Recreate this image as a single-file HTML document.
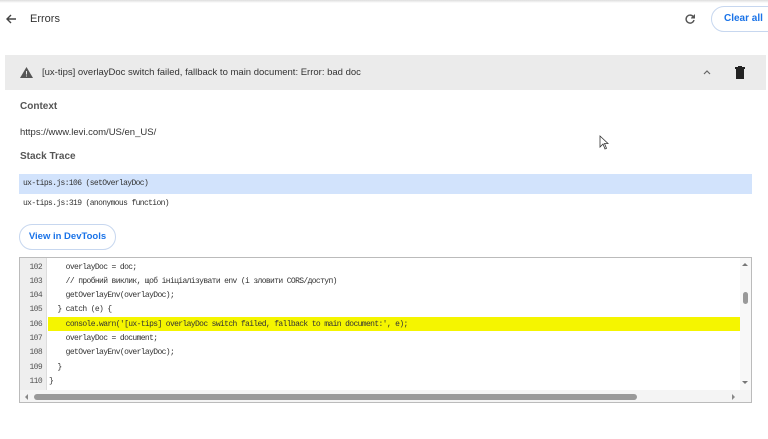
<!DOCTYPE html>
<html><head><meta charset="utf-8"><style>
*{margin:0;padding:0;box-sizing:border-box}
body{width:768px;height:439px;background:#fff;font-family:"Liberation Sans","Noto Sans CJK SC",sans-serif;color:#333;position:relative;overflow:hidden}
.abs{position:absolute}
.mono{font-family:"Liberation Mono","DejaVu Sans Mono",monospace;letter-spacing:-0.63px}
.ln{position:absolute;left:0;width:29px;text-align:right;padding-right:7px;font-size:8px;color:#555}
.cl{position:absolute;left:29px;font-size:8px;color:#333;white-space:pre;height:14px;line-height:14px}
</style></head><body>
<div class="abs" style="left:0;top:0;width:768px;height:3px;background:linear-gradient(#ddd,#fff)"></div>
<svg class="abs" style="left:5px;top:13px" width="12" height="12" viewBox="0 0 12 12"><path d="M11 6H2M6 2L2 6L6 10" stroke="#444" stroke-width="1.4" fill="none"/></svg>
<div class="abs" style="left:30px;top:13px;font-size:11px;color:#333">Errors</div>
<svg class="abs" style="left:684px;top:13px" width="12" height="12" viewBox="0 0 12 12"><path d="M9.5 4A4 4 0 1 0 10 7" stroke="#555" stroke-width="1.4" fill="none"/><path d="M10.5 1.5V5H7" fill="#555" stroke="#555" stroke-width="1"/></svg>
<div class="abs" style="left:711px;top:6px;width:80px;height:26px;border:1px solid #c7d7ef;border-radius:13px;color:#1a73e8;font-size:10px;font-weight:bold;line-height:24px;padding-left:12px">Clear all</div>
<div class="abs" style="left:5px;top:55px;width:761px;height:35px;background:#ebebeb"></div>
<svg class="abs" style="left:20px;top:67px" width="13" height="11" viewBox="0 0 13 11"><path d="M6.5 0L13 11H0Z" fill="#555"/><rect x="6" y="4" width="1" height="3.5" fill="#ebebeb"/><rect x="6" y="8.5" width="1" height="1" fill="#ebebeb"/></svg>
<div class="abs" style="left:42px;top:67px;font-size:9.5px;color:#333">[ux-tips] overlayDoc switch failed, fallback to main document: Error: bad doc</div>
<svg class="abs" style="left:703px;top:69px" width="8" height="6" viewBox="0 0 8 6"><path d="M1 5L4 2L7 5" stroke="#666" stroke-width="1.2" fill="none"/></svg>
<svg class="abs" style="left:735px;top:66px" width="10" height="13" viewBox="0 0 10 13"><rect x="0" y="1" width="10" height="2" fill="#222"/><rect x="3" y="0" width="4" height="2" fill="#222"/><rect x="1" y="3" width="8" height="10" fill="#222"/></svg>
<div class="abs" style="left:20px;top:101px;font-size:10px;color:#555;font-weight:bold">Context</div>
<div class="abs" style="left:20px;top:127px;font-size:9.5px;color:#333">https://www.levi.com/US/en_US/</div>
<div class="abs" style="left:20px;top:151px;font-size:10px;color:#555;font-weight:bold">Stack Trace</div>
<div class="abs mono" style="left:19px;top:174px;width:733px;height:20px;background:#d2e3fc;font-size:8px;line-height:20px;padding-left:4px">ux-tips.js:106 (setOverlayDoc)</div>
<div class="abs mono" style="left:19px;top:194px;width:733px;height:20px;font-size:8px;line-height:20px;padding-left:4px">ux-tips.js:319 (anonymous function)</div>
<div class="abs" style="left:19px;top:224px;width:97px;height:26px;border:1px solid #c7d7ef;border-radius:13px;color:#1a73e8;font-size:9.5px;font-weight:bold;line-height:24px;text-align:center">View in DevTools</div>
<svg class="abs" style="left:599px;top:135px" width="10" height="15" viewBox="0 0 10 15"><path d="M1 1V12L4 9L6 14L7.5 13.3L5.5 8.5H9Z" fill="#fff" stroke="#333" stroke-width=".8"/></svg>
<div class="abs mono" style="left:19px;top:257px;width:733px;height:146px;border:1px solid #bbb;overflow:hidden">
<div class="abs" style="left:0;top:0;width:27px;height:132px;background:#eee;border-right:1px solid #ddd"></div>
<div class="abs" style="left:28px;top:59px;width:692px;height:14px;background:#f5f500"></div>
<div class="ln" style="top:3px;line-height:14px">102</div><div class="cl" style="top:3px">    overlayDoc = doc;</div>
<div class="ln" style="top:17px;line-height:14px">103</div><div class="cl" style="top:17px">    // пробний виклик, щоб ініціалізувати env (і зловити CORS/доступ)</div>
<div class="ln" style="top:31px;line-height:14px">104</div><div class="cl" style="top:31px">    getOverlayEnv(overlayDoc);</div>
<div class="ln" style="top:45px;line-height:14px">105</div><div class="cl" style="top:45px">  } catch (e) {</div>
<div class="ln" style="top:60px;line-height:14px">106</div><div class="cl" style="top:60px">    console.warn('[ux-tips] overlayDoc switch failed, fallback to main document:', e);</div>
<div class="ln" style="top:74px;line-height:14px">107</div><div class="cl" style="top:74px">    overlayDoc = document;</div>
<div class="ln" style="top:88px;line-height:14px">108</div><div class="cl" style="top:88px">    getOverlayEnv(overlayDoc);</div>
<div class="ln" style="top:103px;line-height:14px">109</div><div class="cl" style="top:103px">  }</div>
<div class="ln" style="top:117px;line-height:14px">110</div><div class="cl" style="top:117px">}</div>
<div class="abs" style="left:720px;top:0;width:12px;height:132px;background:#f8f8f8"></div>
<div class="abs" style="left:722px;top:5px;width:0;height:0;border-left:3px solid transparent;border-right:3px solid transparent;border-bottom:3px solid #777"></div>
<div class="abs" style="left:723px;top:34px;width:5px;height:12px;background:#999;border-radius:3px"></div>
<div class="abs" style="left:722px;top:123px;width:0;height:0;border-left:3px solid transparent;border-right:3px solid transparent;border-top:3px solid #777"></div>
<div class="abs" style="left:0;top:132px;width:732px;height:13px;background:#f4f4f4"></div>
<div class="abs" style="left:5px;top:136px;width:0;height:0;border-top:3px solid transparent;border-bottom:3px solid transparent;border-right:3px solid #888"></div>
<div class="abs" style="left:14px;top:136px;width:603px;height:6px;background:#999;border-radius:3px"></div>
<div class="abs" style="left:712px;top:136px;width:0;height:0;border-top:3px solid transparent;border-bottom:3px solid transparent;border-left:3px solid #888"></div>
</div>
</body></html>
